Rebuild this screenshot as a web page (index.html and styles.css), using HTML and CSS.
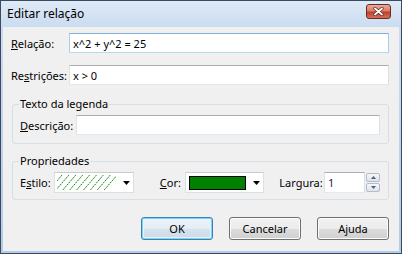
FILE: index.html
```html
<!DOCTYPE html>
<html lang="pt">
<head>
    <meta charset="UTF-8">
    <title>Editar relação</title>
    <link rel="stylesheet" href="styles.css">
</head>
<body>
    <div class="window">
        <div class="titlebar">
            <span class="title">Editar relação</span>
            <button class="close-btn" aria-label="Fechar">
                <svg width="11" height="9" viewBox="0 0 11 9">
                    <path d="M2 1.5 L9 7.5 M9 1.5 L2 7.5" stroke="#5a2a22" stroke-width="3.2" stroke-linecap="round"/>
                    <path d="M2 1.5 L9 7.5 M9 1.5 L2 7.5" stroke="#fff" stroke-width="1.8" stroke-linecap="round"/>
                </svg>
            </button>
        </div>

        <div class="client">
            <div class="field-row">
                <label class="field-label"><u>R</u>elação:</label>
                <input class="textbox focused" type="text" value="x^2 + y^2 = 25">
            </div>
            <div class="field-row">
                <label class="field-label">Re<u>s</u>trições:</label>
                <input class="textbox" type="text" value="x &gt; 0">
            </div>

            <fieldset class="group">
                <legend>Texto da legenda</legend>
                <div class="field-row">
                    <label class="field-label desc-label"><u>D</u>escrição:</label>
                    <input class="textbox" type="text" value="">
                </div>
            </fieldset>

            <fieldset class="group props">
                <legend>Propriedades</legend>
                <div class="props-row">
                    <label class="estilo-label">E<u>s</u>tilo:</label>
                    <div class="combo">
                        <svg class="hatch" width="60" height="15" viewBox="0 0 60 15">
                            <g stroke="#008000" stroke-width="1" stroke-dasharray="2 1">
                                <line x1="-8" y1="15" x2="5" y2="0"/>
                                <line x1="-1" y1="15" x2="12" y2="0"/>
                                <line x1="6" y1="15" x2="19" y2="0"/>
                                <line x1="13" y1="15" x2="26" y2="0"/>
                                <line x1="20" y1="15" x2="33" y2="0"/>
                                <line x1="27" y1="15" x2="40" y2="0"/>
                                <line x1="34" y1="15" x2="47" y2="0"/>
                                <line x1="41" y1="15" x2="54" y2="0"/>
                                <line x1="48" y1="15" x2="61" y2="0"/>
                            </g>
                        </svg>
                        <svg class="arrow" width="7" height="4" viewBox="0 0 7 4"><path d="M0 0 H7 L3.5 4 Z" fill="#000"/></svg>
                    </div>

                    <label class="cor-label"><u>C</u>or:</label>
                    <div class="combo">
                        <span class="swatch"></span>
                        <svg class="arrow" width="7" height="4" viewBox="0 0 7 4"><path d="M0 0 H7 L3.5 4 Z" fill="#000"/></svg>
                    </div>

                    <label class="largura-label">Largura:</label>
                    <input class="textbox spin-input" type="text" value="1">
                    <div class="spinner">
                        <span class="spin-btn"><svg width="5" height="3" viewBox="0 0 5 3"><path d="M0 3 H5 L2.5 0 Z" fill="#4d6185"/></svg></span>
                        <span class="spin-btn"><svg width="5" height="3" viewBox="0 0 5 3"><path d="M0 0 H5 L2.5 3 Z" fill="#4d6185"/></svg></span>
                    </div>
                </div>
            </fieldset>

            <div class="buttons">
                <button class="btn default">OK</button>
                <button class="btn">Cancelar</button>
                <button class="btn">Ajuda</button>
            </div>
        </div>
    </div>
</body>
</html>
```

FILE: styles.css
```css
body {
    margin: 0;
    font-family: "Segoe UI", "Noto Sans", "Liberation Sans", sans-serif;
    font-size: 11px;
    color: #000;
}
u {
    text-decoration: underline;
    text-underline-offset: 1px;
}
.window {
    width: 402px;
    height: 254px;
    box-sizing: border-box;
    border: 1px solid #3b4a5e;
    background: linear-gradient(#dfeaf7, #cadcf0 26px, #b4cbe7);
    display: flex;
    flex-direction: column;
}
.titlebar {
    height: 26px;
    display: flex;
    justify-content: space-between;
    padding: 0 10px 0 6px;
}
.title {
    font-size: 12px;
    line-height: 26px;
}
.close-btn {
    margin-top: 3px;
    width: 25px;
    height: 15px;
    padding: 0;
    border: 1px solid #6e2a20;
    border-radius: 3px;
    background: linear-gradient(#e9a99a, #d7806b 45%, #c23f28 55%, #d4705a);
    display: flex;
    align-items: center;
    justify-content: center;
}
.client {
    flex: 1;
    margin: 0 2px 2px 2px;
    background: #f0f0f0;
    padding: 6px 10px 0 8px;
    display: flex;
    flex-direction: column;
}
.field-row {
    display: flex;
    align-items: center;
    height: 20px;
}
.field-row + .field-row {
    margin-top: 12px;
}
.field-label {
    width: 58px;
    flex-shrink: 0;
}
.desc-label {
    width: 56px;
}
.textbox {
    flex: 1;
    min-width: 0;
    height: 20px;
    box-sizing: border-box;
    margin: 0;
    padding: 0 3px;
    font: inherit;
    color: #000;
    background: #fff;
    border: 1px solid;
    border-color: #abadb3 #dbdfe6 #e3e9ef #e2e3ea;
    outline: none;
}
.textbox.focused {
    border-color: #7fb0e0 #a8cdee #b7d9ed #a8cdee;
}
.group {
    margin: 12px 0 0 1px;
    border: 1px solid #d5dfe5;
    border-radius: 3px;
    padding: 4px 8px 8px 7px;
    min-width: 0;
}
.group legend {
    padding: 0 1px;
    margin-left: -1px;
    line-height: 14px;
}
.group.props {
    margin-top: 10px;
    padding-bottom: 6px;
}
.props-row {
    display: flex;
    align-items: center;
    height: 21px;
}
.estilo-label {
    width: 34px;
}
.cor-label {
    width: 25px;
    margin-left: 26px;
}
.largura-label {
    width: 45px;
    margin-left: 15px;
}
.combo {
    width: 80px;
    height: 21px;
    box-sizing: border-box;
    background: #fff;
    border: 1px solid #dbdfe6;
    border-top-color: #c9ccd2;
    display: flex;
    align-items: center;
    padding: 0 3px 0 2px;
    gap: 7px;
}
.hatch {
    display: block;
}
.arrow {
    margin-left: auto;
    display: block;
}
.swatch {
    width: 57px;
    height: 14px;
    box-sizing: border-box;
    border: 1px solid #000;
    background: #008000;
    margin-left: 1px;
}
.spin-input {
    flex: 0 0 41px;
    height: 21px;
    color: #2e0d4f;
}
.spinner {
    margin-left: 1px;
    width: 14px;
    height: 19px;
    display: flex;
    flex-direction: column;
    gap: 1px;
}
.spin-btn {
    flex: 1;
    box-sizing: border-box;
    border: 1px solid #b6bcc6;
    border-radius: 2px;
    background: linear-gradient(#f6f7f9, #dfe3e9);
    display: flex;
    align-items: center;
    justify-content: center;
}
.spin-btn svg {
    display: block;
}
.buttons {
    margin-top: 17px;
    display: flex;
    justify-content: flex-end;
    gap: 16px;
}
.btn {
    width: 72px;
    height: 23px;
    padding: 0;
    font: inherit;
    color: #000;
    border: 1px solid #707070;
    border-radius: 3px;
    background: linear-gradient(#f2f2f2, #ebebeb 50%, #dddddd 50%, #cfcfcf);
    box-shadow: inset 0 0 0 1px #fcfcfc;
}
.btn.default {
    border-color: #3c7fb1;
    background: linear-gradient(#eef4f9, #e4edf5 50%, #d6e3ee 50%, #cbdbe8);
    box-shadow: inset 0 0 0 1px #7fd3f5, inset 0 0 0 2px #e3f3fb;
}
```
